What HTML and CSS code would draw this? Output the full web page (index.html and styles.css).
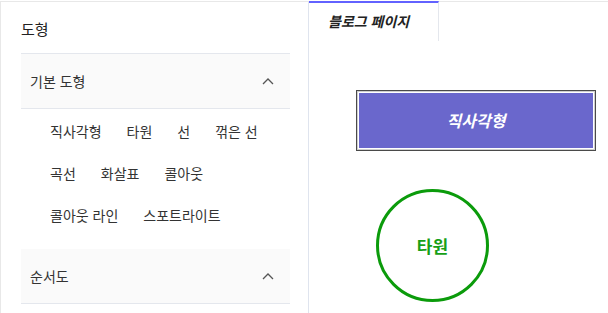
FILE: index.html
```html
<!DOCTYPE html>
<html lang="ko">
<head>
  <meta charset="UTF-8">
  <meta name="viewport" content="width=device-width, initial-scale=1.0">
  <title>도형 편집기</title>
  <link rel="stylesheet" href="styles.css">
</head>
<body>
  <div class="app">
    <aside class="sidebar">
      <div class="sidebar-title">도형</div>

      <div class="group">
        <div class="group-header">
          <span>기본 도형</span>
          <svg class="chevron" viewBox="0 0 12 8" width="12" height="8">
            <path d="M1 7l5-5 5 5" fill="none" stroke="#555" stroke-width="1.3"/>
          </svg>
        </div>
        <div class="group-body">
          <span class="item">직사각형</span>
          <span class="item">타원</span>
          <span class="item">선</span>
          <span class="item">꺾은 선</span>
          <span class="item">곡선</span>
          <span class="item">화살표</span>
          <span class="item">콜아웃</span>
          <span class="item">콜아웃 라인</span>
          <span class="item">스포트라이트</span>
        </div>
      </div>

      <div class="group">
        <div class="group-header">
          <span>순서도</span>
          <svg class="chevron" viewBox="0 0 12 8" width="12" height="8">
            <path d="M1 7l5-5 5 5" fill="none" stroke="#555" stroke-width="1.3"/>
          </svg>
        </div>
      </div>
    </aside>

    <main class="main">
      <div class="tabs">
        <div class="tab active">블로그 페이지</div>
        <div class="tab-rest"></div>
      </div>
      <div class="canvas">
        <!-- 도형은 캔버스 위의 좌표에 놓인다 -->
        <div class="shape-rect">직사각형</div>
        <div class="shape-ellipse">타원</div>
      </div>
    </main>
  </div>
</body>
</html>
```

FILE: styles.css
```css
body {
  margin: 0;
  font-family: "Noto Sans CJK KR", "Noto Sans", sans-serif;
  color: #333;
  background: #fff;
}
.app {
  display: flex;
  height: 312px;
  margin-top: 1px;
  border-left: 1px solid #e8e8e8;
}
.sidebar {
  width: 269px;
  flex: none;
  padding: 0 18px 0 20px;
  border-top: 1px solid #e8e8e8;
  border-right: 1px solid #dfe4ee;
}
.sidebar-title {
  height: 51px;
  line-height: 54px;
  font-size: 15px;
  color: #222;
}
.group {
  border-top: 1px solid #e4e7ed;
}
.group-header {
  display: flex;
  align-items: center;
  justify-content: space-between;
  height: 54px;
  padding: 0 16px 0 9px;
  background: #fafafa;
  font-size: 14px;
  border-bottom: 1px solid #e4e7ed;
}
.chevron {
  display: block;
}
.group-body {
  display: flex;
  flex-wrap: wrap;
  column-gap: 25px;
  padding: 1px 10px 13px 29px;
}
.item {
  height: 42px;
  line-height: 42px;
  font-size: 14px;
  white-space: nowrap;
}
.group + .group {
  border-top: none;
}
.main {
  flex: 1;
  display: flex;
  flex-direction: column;
}
.tabs {
  display: flex;
  height: 40px;
}
.tab {
  width: 110px;
  padding-left: 19px;
  line-height: 36px;
  font-size: 14px;
  font-weight: bold;
  font-style: italic;
  color: #222;
  border-top: 2px solid #6262ff;
  border-right: 1px solid #e4e7ed;
}
.tab-rest {
  flex: 1;
  height: 40px;
  border-top: 1px solid #e8e8e8;
}
.canvas {
  position: relative;
  flex: 1;
}
.shape-rect {
  position: absolute;
  left: 47px;
  top: 49px;
  box-sizing: border-box;
  width: 240px;
  height: 61px;
  padding-bottom: 2px;
  border: 1px solid #4a4a4a;
  box-shadow: inset 0 0 0 1px #cfcfcf, inset 0 0 0 2px #fff;
  background: #6a67cc;
  color: #fff;
  font-size: 16px;
  font-weight: bold;
  font-style: italic;
  display: flex;
  align-items: center;
  justify-content: center;
}
.shape-ellipse {
  position: absolute;
  left: 67px;
  top: 148px;
  width: 107px;
  height: 107px;
  border: 3px solid #0b9b0b;
  border-radius: 50%;
  color: #17a017;
  font-size: 17px;
  font-weight: bold;
  display: flex;
  align-items: center;
  justify-content: center;
}
```
